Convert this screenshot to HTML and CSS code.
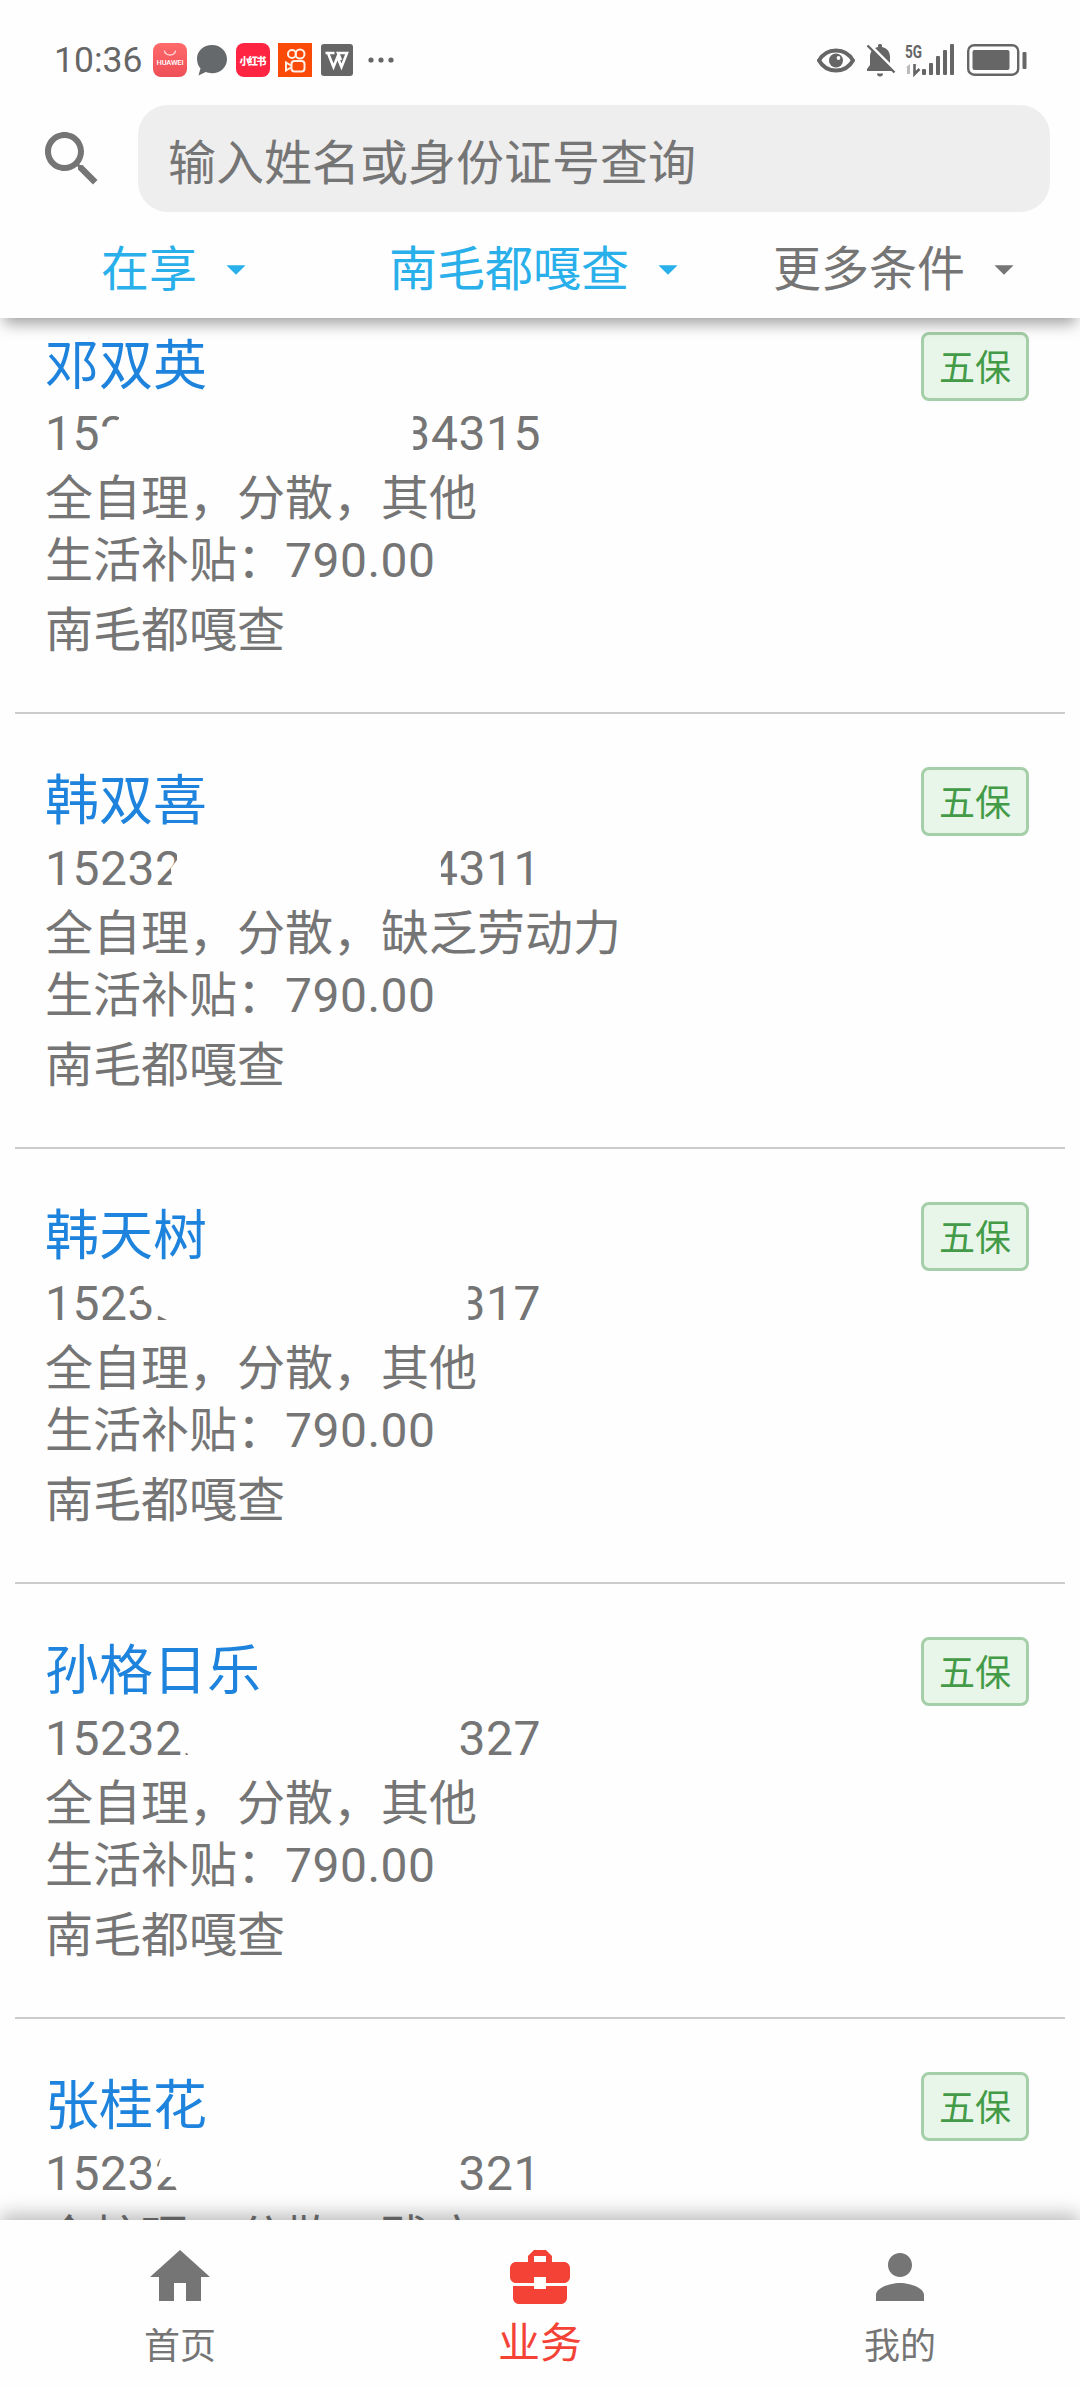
FILE: index.html
```html
<!DOCTYPE html>
<html lang="zh-CN">
<head>
    <meta charset="UTF-8">
    <meta name="viewport" content="width=device-width, initial-scale=1.0">
    <title>业务</title>
    <link rel="stylesheet" href="styles.css">
</head>
<body>
    <header class="header">
        <div class="status-bar">
            <span class="time">10:36</span>
            <svg class="app-icon" width="34" height="34" viewBox="0 0 34 34">
                <defs>
                    <linearGradient id="hw" x1="0" y1="0" x2="0" y2="1">
                        <stop offset="0" stop-color="#ff6a6a"/>
                        <stop offset="1" stop-color="#ee4f58"/>
                    </linearGradient>
                </defs>
                <rect width="34" height="34" rx="8" fill="url(#hw)"/>
                <path d="M11.5 7.5a5.5 4.5 0 0 0 11 0" fill="none" stroke="#ffd9d9" stroke-width="1.3"/>
                <text x="17" y="22" text-anchor="middle" class="huawei" textLength="27">HUAWEI</text>
            </svg>
            <svg class="chat-icon" width="32" height="34" viewBox="0 0 32 34">
                <path d="M16 2C7.500 2 1 8 1 15.500c0 4.500 1.300 7.500 3.500 9.800L2.500 32.500l7.200-3.400c2 .8 4 1.100 6.300 1.100 8.500 0 15-6.200 15-14S24.500 2 16 2z" fill="#66696b"/>
            </svg>
            <svg class="app-icon" width="34" height="34" viewBox="0 0 34 34">
                <rect width="34" height="34" rx="8" fill="#ff2442"/>
                <text x="17" y="21.500" text-anchor="middle" class="xhs" textLength="27">小红书</text>
            </svg>
            <svg class="app-icon" width="34" height="34" viewBox="0 0 34 34">
                <rect width="34" height="34" fill="#fb4a08"/>
                <g fill="none" stroke="#fff0e6" stroke-width="2">
                    <circle cx="14" cy="11" r="4"/>
                    <circle cx="22" cy="11" r="4.500"/>
                    <rect x="13.500" y="18" width="13" height="10.500" rx="3"/>
                    <path d="M13 22.500l-5-3v8l5-3"/>
                </g>
            </svg>
            <svg class="wps-icon" width="32" height="34" viewBox="0 0 32 34">
                <rect y="1" width="32" height="32" rx="3" fill="#666"/>
                <path d="M4.500 10h9M7 10l5.500 14 4-10 4 10L26 10h-9l3 7" fill="none" stroke="#fff" stroke-width="2.600"/>
            </svg>
            <svg class="more-icon" width="26" height="6" viewBox="0 0 26 6" fill="#666">
                <circle cx="3" cy="3" r="2.600"/>
                <circle cx="13" cy="3" r="2.600"/>
                <circle cx="23" cy="3" r="2.600"/>
            </svg>

            <div class="status-right">
                <svg width="38" height="34" viewBox="0 0 38 34">
                    <path d="M2 17.500C6 10.500 12 7.500 19 7.500s13 3 17 10c-4 7-10 10-17 10s-13-3-17-10z" fill="none" stroke="#666" stroke-width="4" stroke-linejoin="round"/>
                    <circle cx="19" cy="17.500" r="7" fill="#666"/>
                    <circle cx="21.500" cy="15" r="1.900" fill="#fff"/>
                </svg>
                <svg class="bell" width="30" height="36" viewBox="0 0 30 36">
                    <path d="M1 29v-2l3-4v-8C4 9.500 7 6 12 5V3.500C12 2.500 13 2 14 2s2 .5 2 1.500V5c5 1 8 4.500 8 10v8l3 4v2z" fill="#666"/>
                    <path d="M11 31.500h6c0 2-1.200 3-3 3s-3-1-3-3z" fill="#666"/>
                    <path d="M4 3l27 27" stroke="#fff" stroke-width="3"/>
                    <path d="M1.500 3.500l27 27" stroke="#666" stroke-width="2.400"/>
                </svg>
                <svg class="signal" width="50" height="36" viewBox="0 0 50 36">
                    <text x="0" y="15.500" class="net" textLength="17" lengthAdjust="spacingAndGlyphs">5G</text>
                    <path d="M0 26l5-4v10h-3v-7z" fill="#bbb"/>
                    <path d="M9.500 22v10l5-5" fill="none" stroke="#666" stroke-width="2.600"/>
                    <g fill="#666">
                        <rect x="17" y="27" width="4" height="6" rx="1"/>
                        <rect x="24" y="21" width="4" height="12" rx="1"/>
                        <rect x="31" y="14" width="4" height="19" rx="1"/>
                        <rect x="38" y="8" width="4" height="25" rx="1"/>
                        <rect x="45" y="2" width="4" height="31" rx="1"/>
                    </g>
                </svg>
                <svg class="battery" width="62" height="34" viewBox="0 0 62 34">
                    <rect x="1.200" y="2.200" width="50" height="29.500" rx="6" fill="none" stroke="#666" stroke-width="2.400"/>
                    <rect x="5.500" y="7" width="37" height="20" rx="2" fill="#666"/>
                    <rect x="55.500" y="9" width="4" height="17" rx="1" fill="#666"/>
                </svg>
            </div>
        </div>

        <div class="search-row">
            <svg class="search-icon" width="72" height="72" viewBox="0 0 24 24">
                <path d="M15.500 14h-.79l-.28-.27C15.410 12.590 16 11.110 16 9.500 16 5.910 13.090 3 9.500 3S3 5.910 3 9.500 5.910 16 9.500 16c1.610 0 3.090-.59 4.230-1.570l.27.28v.79l5 4.990L20.490 19l-4.990-5zm-6 0C7.010 14 5 11.990 5 9.500S7.010 5 9.500 5 14 7.010 14 9.500 11.990 14 9.500 14z"/>
            </svg>
            <div class="search-box">输入姓名或身份证号查询</div>
        </div>

        <div class="filters">
            <div class="filter active">
                <span>在享</span>
                <svg viewBox="0 0 24 24"><path d="M7 10l5 5 5-5z"/></svg>
            </div>
            <div class="filter active">
                <span>南毛都嘎查</span>
                <svg viewBox="0 0 24 24"><path d="M7 10l5 5 5-5z"/></svg>
            </div>
            <div class="filter">
                <span>更多条件</span>
                <svg viewBox="0 0 24 24"><path d="M7 10l5 5 5-5z"/></svg>
            </div>
        </div>
    </header>

    <main class="content">
        <div class="list">
            <div class="card">
                <div class="info">
                    <div class="name">邓双英</div>
                    <div class="id-no"><span class="head-1">152</span><span class="cut-tail">34315</span></div>
                    <div class="detail">全自理，分散，其他</div>
                    <div class="subsidy">生活补贴：<span class="num">790.00</span></div>
                    <div class="village">南毛都嘎查</div>
                </div>
                <span class="tag">五保</span>
            </div>

            <div class="card">
                <div class="info">
                    <div class="name">韩双喜</div>
                    <div class="id-no"><span class="head-2">15232</span><span class="cut-tail">4311</span></div>
                    <div class="detail">全自理，分散，缺乏劳动力</div>
                    <div class="subsidy">生活补贴：<span class="num">790.00</span></div>
                    <div class="village">南毛都嘎查</div>
                </div>
                <span class="tag">五保</span>
            </div>

            <div class="card">
                <div class="info">
                    <div class="name">韩天树</div>
                    <div class="id-no"><span class="head-3">15232</span><span class="cut-tail">317</span></div>
                    <div class="detail">全自理，分散，其他</div>
                    <div class="subsidy">生活补贴：<span class="num">790.00</span></div>
                    <div class="village">南毛都嘎查</div>
                </div>
                <span class="tag">五保</span>
            </div>

            <div class="card">
                <div class="info">
                    <div class="name">孙格日乐</div>
                    <div class="id-no"><span class="head-4">152322</span><span>327</span></div>
                    <div class="detail">全自理，分散，其他</div>
                    <div class="subsidy">生活补贴：<span class="num">790.00</span></div>
                    <div class="village">南毛都嘎查</div>
                </div>
                <span class="tag">五保</span>
            </div>

            <div class="card">
                <div class="info">
                    <div class="name">张桂花</div>
                    <div class="id-no"><span class="head-5">15232</span><span>321</span></div>
                    <div class="detail">全护理，分散，残疾</div>
                </div>
                <span class="tag">五保</span>
            </div>
        </div>
    </main>

    <nav class="bottom-nav">
        <div class="nav-item">
            <svg viewBox="0 0 24 24"><path d="M10 20v-6h4v6h5v-8h3L12 3 2 12h3v8z"/></svg>
            <span>首页</span>
        </div>
        <div class="nav-item active">
            <svg viewBox="0 0 24 24"><path d="M10 16v-1H3.010L3 19c0 1.110.89 2 2 2h14c1.110 0 2-.89 2-2v-4h-7v1h-4zm10-9h-4.010V5l-2-2h-4l-2 2v2H4c-1.100 0-2 .9-2 2v3c0 1.110.89 2 2 2h6v-2h4v2h6c1.100 0 2-.9 2-2V9c0-1.100-.9-2-2-2zm-6 0h-4V5h4v2z"/></svg>
            <span>业务</span>
        </div>
        <div class="nav-item">
            <svg viewBox="0 0 24 24"><path d="M12 12c2.210 0 4-1.790 4-4s-1.790-4-4-4-4 1.790-4 4 1.790 4 4 4zm0 2c-2.670 0-8 1.340-8 4v2h16v-2c0-2.660-5.330-4-8-4z"/></svg>
            <span>我的</span>
        </div>
    </nav>
</body>
</html>
```

FILE: styles.css
```css
* {
    margin: 0;
    padding: 0;
    box-sizing: border-box;
}

body {
    display: flex;
    flex-direction: column;
    height: 2388px;
    overflow: hidden;
    font-family: "Noto Sans CJK SC", sans-serif;
    font-size: 48px;
    color: #757575;
    background: #fefefe;
}

svg {
    display: block;
    flex: none;
}

/* header */
.header {
    position: relative;
    z-index: 2;
    flex: none;
    height: 318px;
    background: #fefefe;
    box-shadow: 0 10px 14px -4px rgba(0, 0, 0, 0.36);
}

.status-bar {
    display: flex;
    align-items: center;
    height: 105px;
    padding: 15px 51px 0 54px;
}

.time {
    width: 99px;
    font-family: Roboto, sans-serif;
    font-size: 35.5px;
    line-height: 34px;
    color: #666;
}

.chat-icon {
    margin-left: 9px;
}

.chat-icon + .app-icon {
    margin: 0 8px;
}

.wps-icon {
    margin: 0 15px 0 9px;
}

.huawei {
    font: 500 7.5px Roboto, sans-serif;
    fill: #fff;
}

.xhs {
    font: 900 10px "Noto Sans CJK SC", sans-serif;
    fill: #fff;
}

.status-right {
    display: flex;
    align-items: center;
    margin-left: auto;
}

.bell {
    margin-left: 11px;
}

.signal {
    margin-left: 9px;
}

.net {
    font: 700 19px Roboto, sans-serif;
    fill: #666;
}

.battery {
    margin-left: 12px;
}

.search-row {
    display: flex;
    align-items: center;
    height: 107px;
    padding: 0 30px 0 36px;
}

.search-icon {
    fill: #757575;
    margin-right: 30px;
}

.search-box {
    flex: 1;
    height: 107px;
    padding-left: 30px;
    line-height: 109px;
    background: #eee;
    border-radius: 30px;
}

.filters {
    display: grid;
    grid-template-columns: repeat(3, 1fr);
    height: 106px;
}

.filter {
    display: flex;
    align-items: center;
    justify-content: center;
    gap: 16px;
    line-height: 103px;
}

.filter svg {
    width: 46px;
    height: 46px;
    margin-top: 8px;
    fill: currentColor;
}

.filter.active {
    color: #29b0ea;
}

/* list */
.content {
    flex: 1;
    overflow: hidden;
}

/* scrolled slightly under the header */
.list {
    margin-top: -39px;
    padding: 0 15px;
}

.card {
    display: flex;
    justify-content: space-between;
    align-items: flex-start;
    height: 435px;
    padding: 47px 36px 0 30px;
    border-bottom: 2px solid #ccc;
}

.name {
    height: 70px;
    font-size: 54px;
    line-height: 72px;
    color: #1e83dc;
}

.id-no {
    display: flex;
    justify-content: space-between;
    width: 496px;
    margin-top: 7px;
    font-family: Roboto, sans-serif;
    line-height: 62px;
    letter-spacing: 0.55px;
}

.detail {
    height: 57px;
    line-height: 58px;
}

.subsidy {
    height: 70px;
    line-height: 68px;
}

.village {
    line-height: 69px;
}

.num {
    font-family: Roboto, sans-serif;
    letter-spacing: 0.5px;
    line-height: 1;
}

/* masked id numbers */
.head-1 {
    clip-path: polygon(0 0, 74px 0, 74px 16px, 60px 25px, 56px 25px, 56px 100%, 0 100%);
}

.head-2 {
    clip-path: polygon(0 0, 132px 0, 132px 22px, 126px 30px, 126px 40px, 129px 100%, 0 100%);
}

.head-3 {
    clip-path: polygon(0 0, 98px 0, 99px 28px, 109px 34px, 110px 41px, 128px 50px, 128px 100%, 0 100%);
}

.head-4 {
    clip-path: polygon(0 0, 137px 0, 137px 45px, 142px 45px, 145px 50px, 0 50px);
}

.head-5 {
    clip-path: polygon(0 0, 120px 0, 112px 29px, 112px 34px, 126px 34px, 133px 50px, 0 50px);
}

.cut-tail {
    clip-path: inset(0 0 0 10px);
}

.tag {
    height: 69px;
    margin-top: 6px;
    padding: 0 15px;
    font-size: 36px;
    line-height: 61px;
    color: #439a47;
    background: #e8f5e9;
    border: 3px solid #a5cfa8;
    border-radius: 8px;
}

/* bottom nav */
.bottom-nav {
    position: relative;
    z-index: 2;
    flex: none;
    display: grid;
    grid-template-columns: repeat(3, 1fr);
    height: 168px;
    background: #fefefe;
    box-shadow: 0 -6px 18px rgba(0, 0, 0, 0.26);
}

.nav-item {
    display: flex;
    flex-direction: column;
    align-items: center;
    padding-top: 21px;
    font-size: 36px;
}

.nav-item svg {
    width: 72px;
    height: 72px;
    fill: currentColor;
}

.nav-item span {
    line-height: 60px;
}

.nav-item.active {
    color: #f44336;
}

.nav-item.active span {
    font-size: 42px;
    line-height: 53px;
}
```
